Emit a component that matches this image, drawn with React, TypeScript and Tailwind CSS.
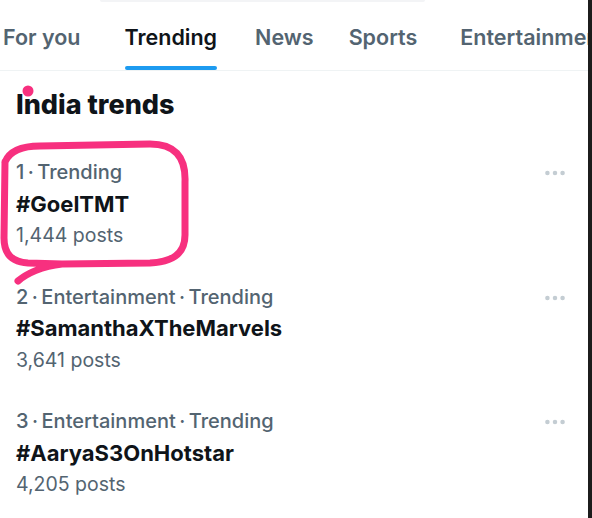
import { MoreHorizontal } from "lucide-react";

const tabs = [
  { label: "For you", active: false, space: "ml-0" },
  { label: "Trending", active: true, space: "ml-[44px]" },
  { label: "News", active: false, space: "ml-[38px]" },
  { label: "Sports", active: false, space: "ml-[35px]" },
  { label: "Entertainment", active: false, space: "ml-[43px]" },
];

const trends = [
  { meta: "1\u2009·\u2009Trending", tag: "#GoelTMT", posts: "1,444 posts" },
  { meta: "2\u2009·\u2009Entertainment\u2009·\u2009Trending", tag: "#SamanthaXTheMarvels", posts: "3,641 posts" },
  { meta: "3\u2009·\u2009Entertainment\u2009·\u2009Trending", tag: "#AaryaS3OnHotstar", posts: "4,205 posts" },
];

export default function App() {
  return (
    <div className="flex h-[518px] w-[592px] bg-white font-['Inter','Liberation_Sans',sans-serif]">
      <div className="relative flex-1 overflow-hidden">
        {/* search box edge */}
        <div className="ml-[100px] h-[2px] w-[325px] rounded-b bg-gray-100" />

        {/* tabs */}
        <div className="flex h-[69px] border-b border-[#eff3f4] pl-[3px] whitespace-nowrap">
          {tabs.map((t) => (
            <div key={t.label} className={`relative flex items-center pt-[3px] ${t.space}`}>
              <span
                className={`text-[21.5px] font-semibold ${t.active ? "text-[#0f1419]" : "text-[#536471]"}`}
              >
                {t.label}
              </span>
              {t.active && (
                <div className="absolute bottom-0 left-0 h-[4px] w-full rounded-full bg-[#1d9bf0]" />
              )}
            </div>
          ))}
        </div>

        <h1 className="mt-[19px] pl-[16px] text-[27px] font-extrabold leading-[30px] text-[#0f1419]">
          India trends
        </h1>

        <div className="mt-[37px] flex flex-col gap-[30px]">
          {trends.map((t) => (
            <div key={t.tag} className="flex items-start justify-between pl-[16px] pr-[20px]">
              <div className="flex flex-col">
                <span className="text-[20px] font-medium leading-[31.5px] text-[#536471]">{t.meta}</span>
                <span className="text-[22px] font-bold leading-[31.5px] text-[#0f1419]">{t.tag}</span>
                <span className="text-[19.5px] leading-[31.5px] text-[#536471]">{t.posts}</span>
              </div>
              <MoreHorizontal size={26} strokeWidth={2.2} className="mt-[3px] text-[#c4cdd3]" />
            </div>
          ))}
        </div>

        {/* pink highlight annotation */}
        <div className="absolute inset-0 pointer-events-none">
          <svg width="588" height="518" viewBox="0 0 588 518">
            <circle cx="28" cy="91" r="5.5" fill="#f7307f" />
            <path
              d="M5 162 C10 150 22 146 40 146 L150 144 C174 144 186 156 185 182 L185 235 C185 254 172 262 150 263 L62 264 C42 266 26 274 18 281 M5 162 L4 238 C4 254 12 262 28 263 L62 264"
              fill="none"
              stroke="#f7307f"
              strokeWidth="7"
              strokeLinecap="round"
              strokeLinejoin="round"
            />
          </svg>
        </div>
      </div>
      <div className="w-[4px] bg-[#1c1c1c]" />
    </div>
  );
}
